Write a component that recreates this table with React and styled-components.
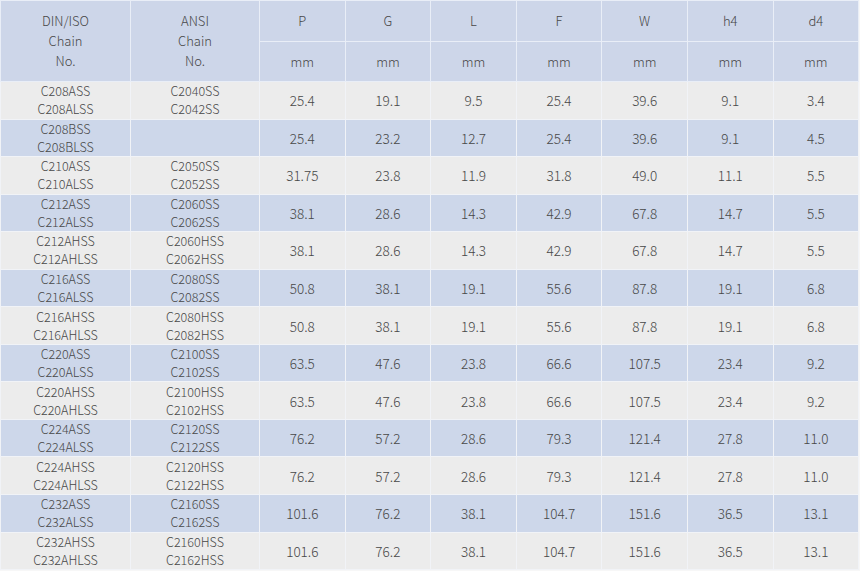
import React from 'react'
import styled, { createGlobalStyle } from 'styled-components'

const Global = createGlobalStyle`
	html, body {
		margin: 0;
		padding: 0;
		background: #f7f7f7;
	}
`;

const Table = styled.table`
	width: 858px;
	table-layout: fixed;
	border-collapse: collapse;
	font-family: "Noto Sans CJK JP", "Noto Sans", sans-serif;
	font-weight: 300;
	font-size: 13px;
	color: #474747;
	text-align: center;
`;

const Head = styled.th`
	background: #cdd6e9;
	font-weight: 300;
	border: 1px solid #e9eef7;
	height: ${(p) => p.$h}px;
	line-height: 20px;
	padding: 0;
	vertical-align: middle;
`;

const Row = styled.tr`
	height: 37.55px;
	background: ${(p) => (p.$blue ? '#cdd7ea' : '#ececec')};
`;

const Cell = styled.td`
	border: 1px solid #f1f3f7;
	padding: 0;
	line-height: 18px;
	vertical-align: middle;
	font-size: ${(p) => (p.$big ? '13.5px' : '12.5px')};
`;

const cols = ['P', 'G', 'L', 'F', 'W', 'h4', 'd4'];

const rows = [
	['C208ASS', 'C208ALSS', 'C2040SS', 'C2042SS', '25.4', '19.1', '9.5', '25.4', '39.6', '9.1', '3.4'],
	['C208BSS', 'C208BLSS', '', '', '25.4', '23.2', '12.7', '25.4', '39.6', '9.1', '4.5'],
	['C210ASS', 'C210ALSS', 'C2050SS', 'C2052SS', '31.75', '23.8', '11.9', '31.8', '49.0', '11.1', '5.5'],
	['C212ASS', 'C212ALSS', 'C2060SS', 'C2062SS', '38.1', '28.6', '14.3', '42.9', '67.8', '14.7', '5.5'],
	['C212AHSS', 'C212AHLSS', 'C2060HSS', 'C2062HSS', '38.1', '28.6', '14.3', '42.9', '67.8', '14.7', '5.5'],
	['C216ASS', 'C216ALSS', 'C2080SS', 'C2082SS', '50.8', '38.1', '19.1', '55.6', '87.8', '19.1', '6.8'],
	['C216AHSS', 'C216AHLSS', 'C2080HSS', 'C2082HSS', '50.8', '38.1', '19.1', '55.6', '87.8', '19.1', '6.8'],
	['C220ASS', 'C220ALSS', 'C2100SS', 'C2102SS', '63.5', '47.6', '23.8', '66.6', '107.5', '23.4', '9.2'],
	['C220AHSS', 'C220AHLSS', 'C2100HSS', 'C2102HSS', '63.5', '47.6', '23.8', '66.6', '107.5', '23.4', '9.2'],
	['C224ASS', 'C224ALSS', 'C2120SS', 'C2122SS', '76.2', '57.2', '28.6', '79.3', '121.4', '27.8', '11.0'],
	['C224AHSS', 'C224AHLSS', 'C2120HSS', 'C2122HSS', '76.2', '57.2', '28.6', '79.3', '121.4', '27.8', '11.0'],
	['C232ASS', 'C232ALSS', 'C2160SS', 'C2162SS', '101.6', '76.2', '38.1', '104.7', '151.6', '36.5', '13.1'],
	['C232AHSS', 'C232AHLSS', 'C2160HSS', 'C2162HSS', '101.6', '76.2', '38.1', '104.7', '151.6', '36.5', '13.1'],
];

export default function App() {
	return (
		<>
			<Global />
			<Table>
				<colgroup>
					<col style={{ width: 130 }} />
					<col style={{ width: 129 }} />
					{cols.map((c) => <col key={c} style={{ width: 85.6 }} />)}
				</colgroup>
				<thead>
					<tr>
						<Head rowSpan={2} $h={80}>DIN/ISO<br />Chain<br />No.</Head>
						<Head rowSpan={2} $h={80}>ANSI<br />Chain<br />No.</Head>
						{cols.map((c) => <Head key={c} $h={40}>{c}</Head>)}
					</tr>
					<tr>
						{cols.map((c) => <Head key={c} $h={39}>mm</Head>)}
					</tr>
				</thead>
				<tbody>
					{rows.map((r, i) => (
						<Row key={i} $blue={i % 2 === 1}>
							<Cell>{r[0]}<br />{r[1]}</Cell>
							<Cell>{r[2]}<br />{r[3]}</Cell>
							{r.slice(4).map((v, j) => <Cell key={j} $big>{v}</Cell>)}
						</Row>
					))}
				</tbody>
			</Table>
		</>
	);
}
